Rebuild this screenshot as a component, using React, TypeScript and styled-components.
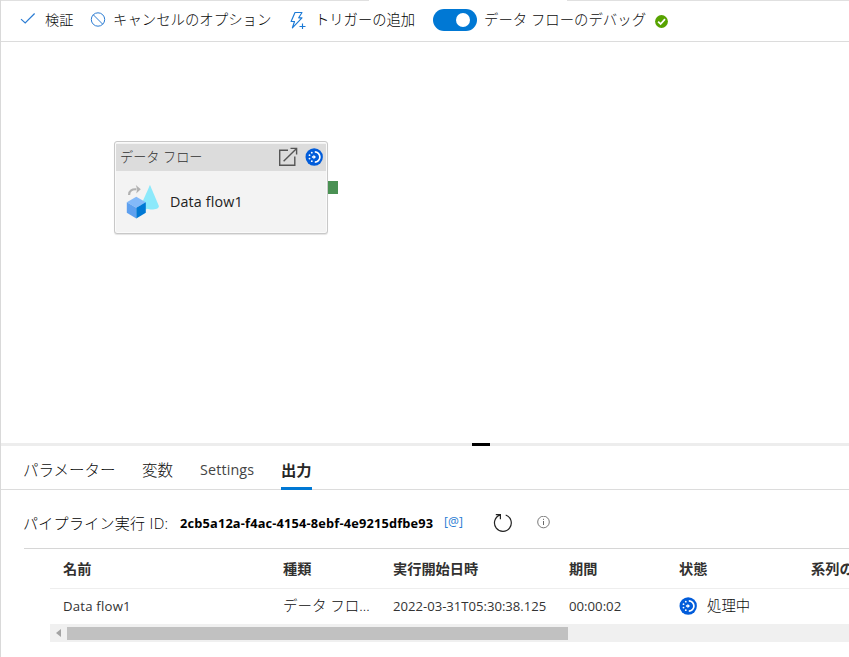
import React from 'react';
import styled, { createGlobalStyle } from 'styled-components';

const GlobalStyle = createGlobalStyle`
  * { box-sizing: border-box; }
  html, body { margin: 0; padding: 0; background: #fff; overflow: hidden; }
  body { font-family: "Open Sans", "Noto Sans CJK JP", sans-serif; color: #222; }
  svg { display: block; flex: none; }
`;

const Page = styled.div`
  width: 849px;
  height: 657px;
  display: flex;
  flex-direction: column;
  border-left: 1px solid #d9d9d9;
  overflow: hidden;
`;

const TopEdge = styled.div`
  display: flex;
  justify-content: space-between;
  flex: none;
  height: 1px;
`;

const EdgeLine = styled.div<{ $width: number }>`
  width: ${(p) => p.$width}px;
  background: #e0e0e0;
`;

const Toolbar = styled.header`
  display: flex;
  align-items: center;
  flex: none;
  height: 41px;
  padding: 0 0 3px 19px;
  border-bottom: 1px solid #dcdcdc;
`;

const Text = styled.span<{
  $size: number;
  $width?: number;
  $weight?: number;
  $color?: string;
  $spacing?: number;
}>`
  flex: none;
  width: ${(p) => (p.$width ? `${p.$width}px` : 'auto')};
  font-size: ${(p) => p.$size}px;
  font-weight: ${(p) => p.$weight ?? 300};
  color: ${(p) => p.$color ?? '#0c0c0c'};
  letter-spacing: ${(p) => p.$spacing ?? 0}px;
  line-height: 20px;
  white-space: pre;
`;

const Command = styled.div<{ $gap: number; $width: number }>`
  display: flex;
  align-items: center;
  flex: none;
  gap: ${(p) => p.$gap}px;
  width: ${(p) => p.$width}px;
`;

const Toggle = styled.div`
  display: flex;
  align-items: center;
  justify-content: flex-end;
  flex: none;
  width: 44px;
  height: 22px;
  padding-right: 7px;
  border-radius: 11px;
  background: #0078d4;
  margin-top: 1px;
`;

const Knob = styled.div`
  width: 14px;
  height: 14px;
  border-radius: 50%;
  background: #fff;
`;

const Canvas = styled.main`
  flex: none;
  height: 401px;
  padding: 99px 0 0 113px;
  display: flex;
  align-items: flex-start;
`;

const Node = styled.section`
  width: 214px;
  height: 93px;
  flex: none;
  border: 1px solid #c8c8c8;
  border-radius: 3px;
  background: #f3f3f3;
  box-shadow: inset 0 0 0 1px #fafafa, 0 1px 1px #e4e4e4;
  padding: 2px 1px 1px;
`;

const NodeHeader = styled.div`
  display: flex;
  align-items: center;
  height: 27px;
  padding: 0 2px 1px 4px;
  background: #dcdcdc;
`;

const NodeBody = styled.div`
  display: flex;
  align-items: center;
  height: 62px;
  padding-left: 10px;
  gap: 10px;
`;

const Port = styled.div`
  width: 10px;
  height: 13px;
  margin-top: 40px;
  background: #4a9153;
`;

const Splitter = styled.div`
  flex: none;
  height: 3px;
  background: #ededed;
  padding-left: 471px;
`;

const Grip = styled.div`
  width: 18px;
  height: 3px;
  background: #000;
`;

const Tabs = styled.nav`
  display: flex;
  flex: none;
  height: 44px;
  padding-left: 22px;
  gap: 26px;
  border-bottom: 1px solid #dcdcdc;
`;

const Tab = styled.div<{ $active?: boolean; $width: number }>`
  display: flex;
  align-items: center;
  flex: none;
  width: ${(p) => p.$width}px;
  height: 44px;
  padding-top: 6px;
  border-bottom: 3px solid ${(p) => (p.$active ? '#0078d4' : 'transparent')};
`;

const RunBar = styled.div`
  display: flex;
  align-items: center;
  flex: none;
  height: 58px;
  padding: 8px 0 0 22px;
`;

const IconSlot = styled.div<{ $width: number; $lift?: number }>`
  flex: none;
  width: ${(p) => p.$width}px;
  padding-bottom: ${(p) => p.$lift ?? 0}px;
`;

const Output = styled.section`
  flex: none;
  margin-left: 23px;
  padding-left: 26px;
  border-top: 1px solid #d6d6d6;
`;

const Row = styled.div<{ $height: number }>`
  display: grid;
  grid-template-columns: 220px 110px 176px 110px 132px 60px;
  align-items: center;
  height: ${(p) => p.$height}px;
  padding: 0 0 0 13px;
  overflow: hidden;

  & + & { border-top: 1px solid #eee; padding-bottom: 2px; }
`;

const Cell = styled.div<{ $clip?: number }>`
  display: flex;
  align-items: center;
  gap: 10px;
  width: ${(p) => (p.$clip ? `${p.$clip}px` : 'auto')};
  overflow: ${(p) => (p.$clip ? 'hidden' : 'visible')};
`;

const Scrollbar = styled.div`
  display: flex;
  align-items: center;
  height: 18px;
  background: #f0f0f0;
`;

const ScrollArrow = styled.div`
  display: flex;
  justify-content: center;
  width: 17px;
`;

const Thumb = styled.div`
  width: 501px;
  height: 13px;
  background: #c1c1c1;
`;

const CheckIcon = () => (
  <svg width="16" height="16" viewBox="0 0 16 16" fill="none">
    <path d="M1 7.1 5.2 10.9 14.6 1.5" stroke="#2b7cd3" strokeWidth="1.2" />
  </svg>
);

const CancelIcon = () => (
  <svg width="16" height="16" viewBox="0 0 16 16" fill="none" stroke="#2b7cd3">
    <circle cx="8" cy="7.5" r="6.7" />
    <path d="m3.3 2.8 9.4 9.4" />
  </svg>
);

const TriggerIcon = () => (
  <svg width="18" height="18" viewBox="0 0 18 18" fill="none" stroke="#1b7ad6" strokeWidth="1.15">
    <path d="M6 1.5h7L9.7 6.8H13L3.4 16.8 5.5 10.5H2.1z" strokeLinejoin="round" />
    <path d="M13.5 12.5v5.5M10.5 15.5h6" />
  </svg>
);

const SuccessIcon = () => (
  <svg width="14" height="16" viewBox="0 0 14 16">
    <circle cx="7.5" cy="9.5" r="6.4" fill="#57a300" />
    <path d="m4.1 9.6 2.5 2.4 4.4-4.8" fill="none" stroke="#fff" strokeWidth="1.8" />
  </svg>
);

const ProgressIcon = () => (
  <svg width="18" height="18" viewBox="0 0 18 18">
    <circle cx="9.2" cy="9" r="8.7" fill="#015cda" />
    <path d="M9.8 3.9A5.1 5.1 0 0 1 9.8 14.1" fill="none" stroke="#fff" strokeWidth="1.7" />
    <g fill="#fff">
      <circle cx="6.8" cy="4.7" r="0.9" />
      <circle cx="4.5" cy="7.2" r="0.9" />
      <circle cx="4.5" cy="10.6" r="0.9" />
      <circle cx="6.8" cy="13.2" r="0.9" />
      <path d="M6.9 8.2h1.6V6.7L11 9l-2.5 2.3V9.8H6.9z" />
    </g>
  </svg>
);

const OpenIcon = () => (
  <svg width="20" height="20" viewBox="0 0 20 20" fill="none" stroke="#555" strokeWidth="1.4">
    <path d="M10 3.2H1.7v15.1h15.1V9.5M5.6 14.2 18.6 1.4M12.5 1.4h6.1v6.1" />
  </svg>
);

const DataFlowIcon = () => (
  <svg width="34" height="36" viewBox="0 0 34 36">
    <path d="M24 1 32.9 22c.5 4.6-14 4.6-14 .5z" fill="#8ce9fb" />
    <path d="M24 1 15 21l5 4.5 4-3z" fill="#8ce9fb" />
    <path d="M3.1 10.9C3 6.5 6.2 4.9 10.5 5.3" fill="none" stroke="#b1b1b1" strokeWidth="2.2" />
    <path d="m9.8.9 5 4.4-4.6 4.1 1-4.1z" fill="#b1b1b1" />
    <path d="m10.3 12.8 9.5 5.4-9.5 5.5-9.5-5.5z" fill="#83b9f9" />
    <path d="m.8 18.2 9.5 5.5v10.8L.8 28.8z" fill="#5ea0ef" />
    <path d="m19.8 18.2-9.5 5.5v10.8l9.5-5.7z" fill="#0078d4" />
  </svg>
);

const RefreshIcon = () => (
  <svg width="20" height="20" viewBox="0 0 20 20" fill="none" stroke="#222" strokeWidth="1.2">
    <path d="M12.7 2A8.4 8.4 0 1 1 6.8 2.1M2.8 1.6h4.6v4.6" />
  </svg>
);

const InfoIcon = () => (
  <svg width="14" height="14" viewBox="0 0 14 14" fill="none" stroke="#6a6a6a">
    <circle cx="7.5" cy="6" r="5.8" strokeWidth="0.9" />
    <path d="M7.5 5v4M7.5 2.8v1.1" />
  </svg>
);

const headings = ['名前', '種類', '実行開始日時', '期間', '状態', '系列の'];

export default function App() {
  return (
    <>
      <GlobalStyle />
      <Page>
        <TopEdge>
          <EdgeLine $width={368} />
          <EdgeLine $width={282} />
        </TopEdge>
        <Toolbar>
          <Command $gap={9} $width={70}>
            <CheckIcon />
            <Text $size={14.2}>検証</Text>
          </Command>
          <Command $gap={7} $width={199}>
            <CancelIcon />
            <Text $size={14.4}>キャンセルのオプション</Text>
          </Command>
          <Command $gap={8} $width={144}>
            <TriggerIcon />
            <Text $size={14.3} $color="#000">トリガーの追加</Text>
          </Command>
          <Command $gap={7} $width={221}>
            <Toggle><Knob /></Toggle>
            <Text $size={14.4}>データ フローのデバッグ</Text>
          </Command>
          <IconSlot $width={14}><SuccessIcon /></IconSlot>
        </Toolbar>
        <Canvas>
          <Node>
            <NodeHeader>
              <Text $size={13.2} $width={158} $color="#333">データ フロー</Text>
              <IconSlot $width={27}><OpenIcon /></IconSlot>
              <ProgressIcon />
            </NodeHeader>
            <NodeBody>
              <DataFlowIcon />
              <Text $size={14.3} $weight={400} $color="#222" $spacing={0.15}>Data flow1</Text>
            </NodeBody>
          </Node>
          <Port />
        </Canvas>
        <Splitter><Grip /></Splitter>
        <Tabs>
          <Tab $width={93}><Text $size={15.5}>パラメーター</Text></Tab>
          <Tab $width={32}><Text $size={15.5}>変数</Text></Tab>
          <Tab $width={55}><Text $size={14.3} $weight={400} $color="#444" $spacing={0.15}>Settings</Text></Tab>
          <Tab $width={31} $active><Text $size={15.3} $weight={700} $color="#262626">出力</Text></Tab>
        </Tabs>
        <RunBar>
          <Text $size={15} $width={157} $color="#000" $spacing={0.3}>パイプライン実行 ID:</Text>
          <Text $size={12.8} $width={264} $weight={700} $color="#000" $spacing={0.17}>2cb5a12a-f4ac-4154-8ebf-4e9215dfbe93</Text>
          <IconSlot $width={49} $lift={5}><Text $size={12.2} $weight={400} $color="#2b7cd3">[@]</Text></IconSlot>
          <IconSlot $width={43}><RefreshIcon /></IconSlot>
          <IconSlot $width={14}><InfoIcon /></IconSlot>
        </RunBar>
        <Output>
          <Row $height={39}>
            {headings.map((h) => (
              <Cell key={h}><Text $size={14.2} $weight={700} $color="#323130">{h}</Text></Cell>
            ))}
          </Row>
          <Row $height={36}>
            <Cell><Text $size={13.2} $weight={400} $color="#333" $spacing={0.2}>Data flow1</Text></Cell>
            <Cell><Text $size={14.5}>データ フロ...</Text></Cell>
            <Cell $clip={154}><Text $size={13.1} $weight={400} $color="#333">2022-03-31T05:30:38.1255</Text></Cell>
            <Cell><Text $size={13.2} $weight={400} $color="#333">00:00:02</Text></Cell>
            <Cell><ProgressIcon /><Text $size={14.4}>処理中</Text></Cell>
          </Row>
          <Scrollbar>
            <ScrollArrow>
              <svg width="5" height="8" viewBox="0 0 5 8"><path d="M5 0v8L0 4z" fill="#a3a3a3" /></svg>
            </ScrollArrow>
            <Thumb />
          </Scrollbar>
        </Output>
      </Page>
    </>
  );
}
